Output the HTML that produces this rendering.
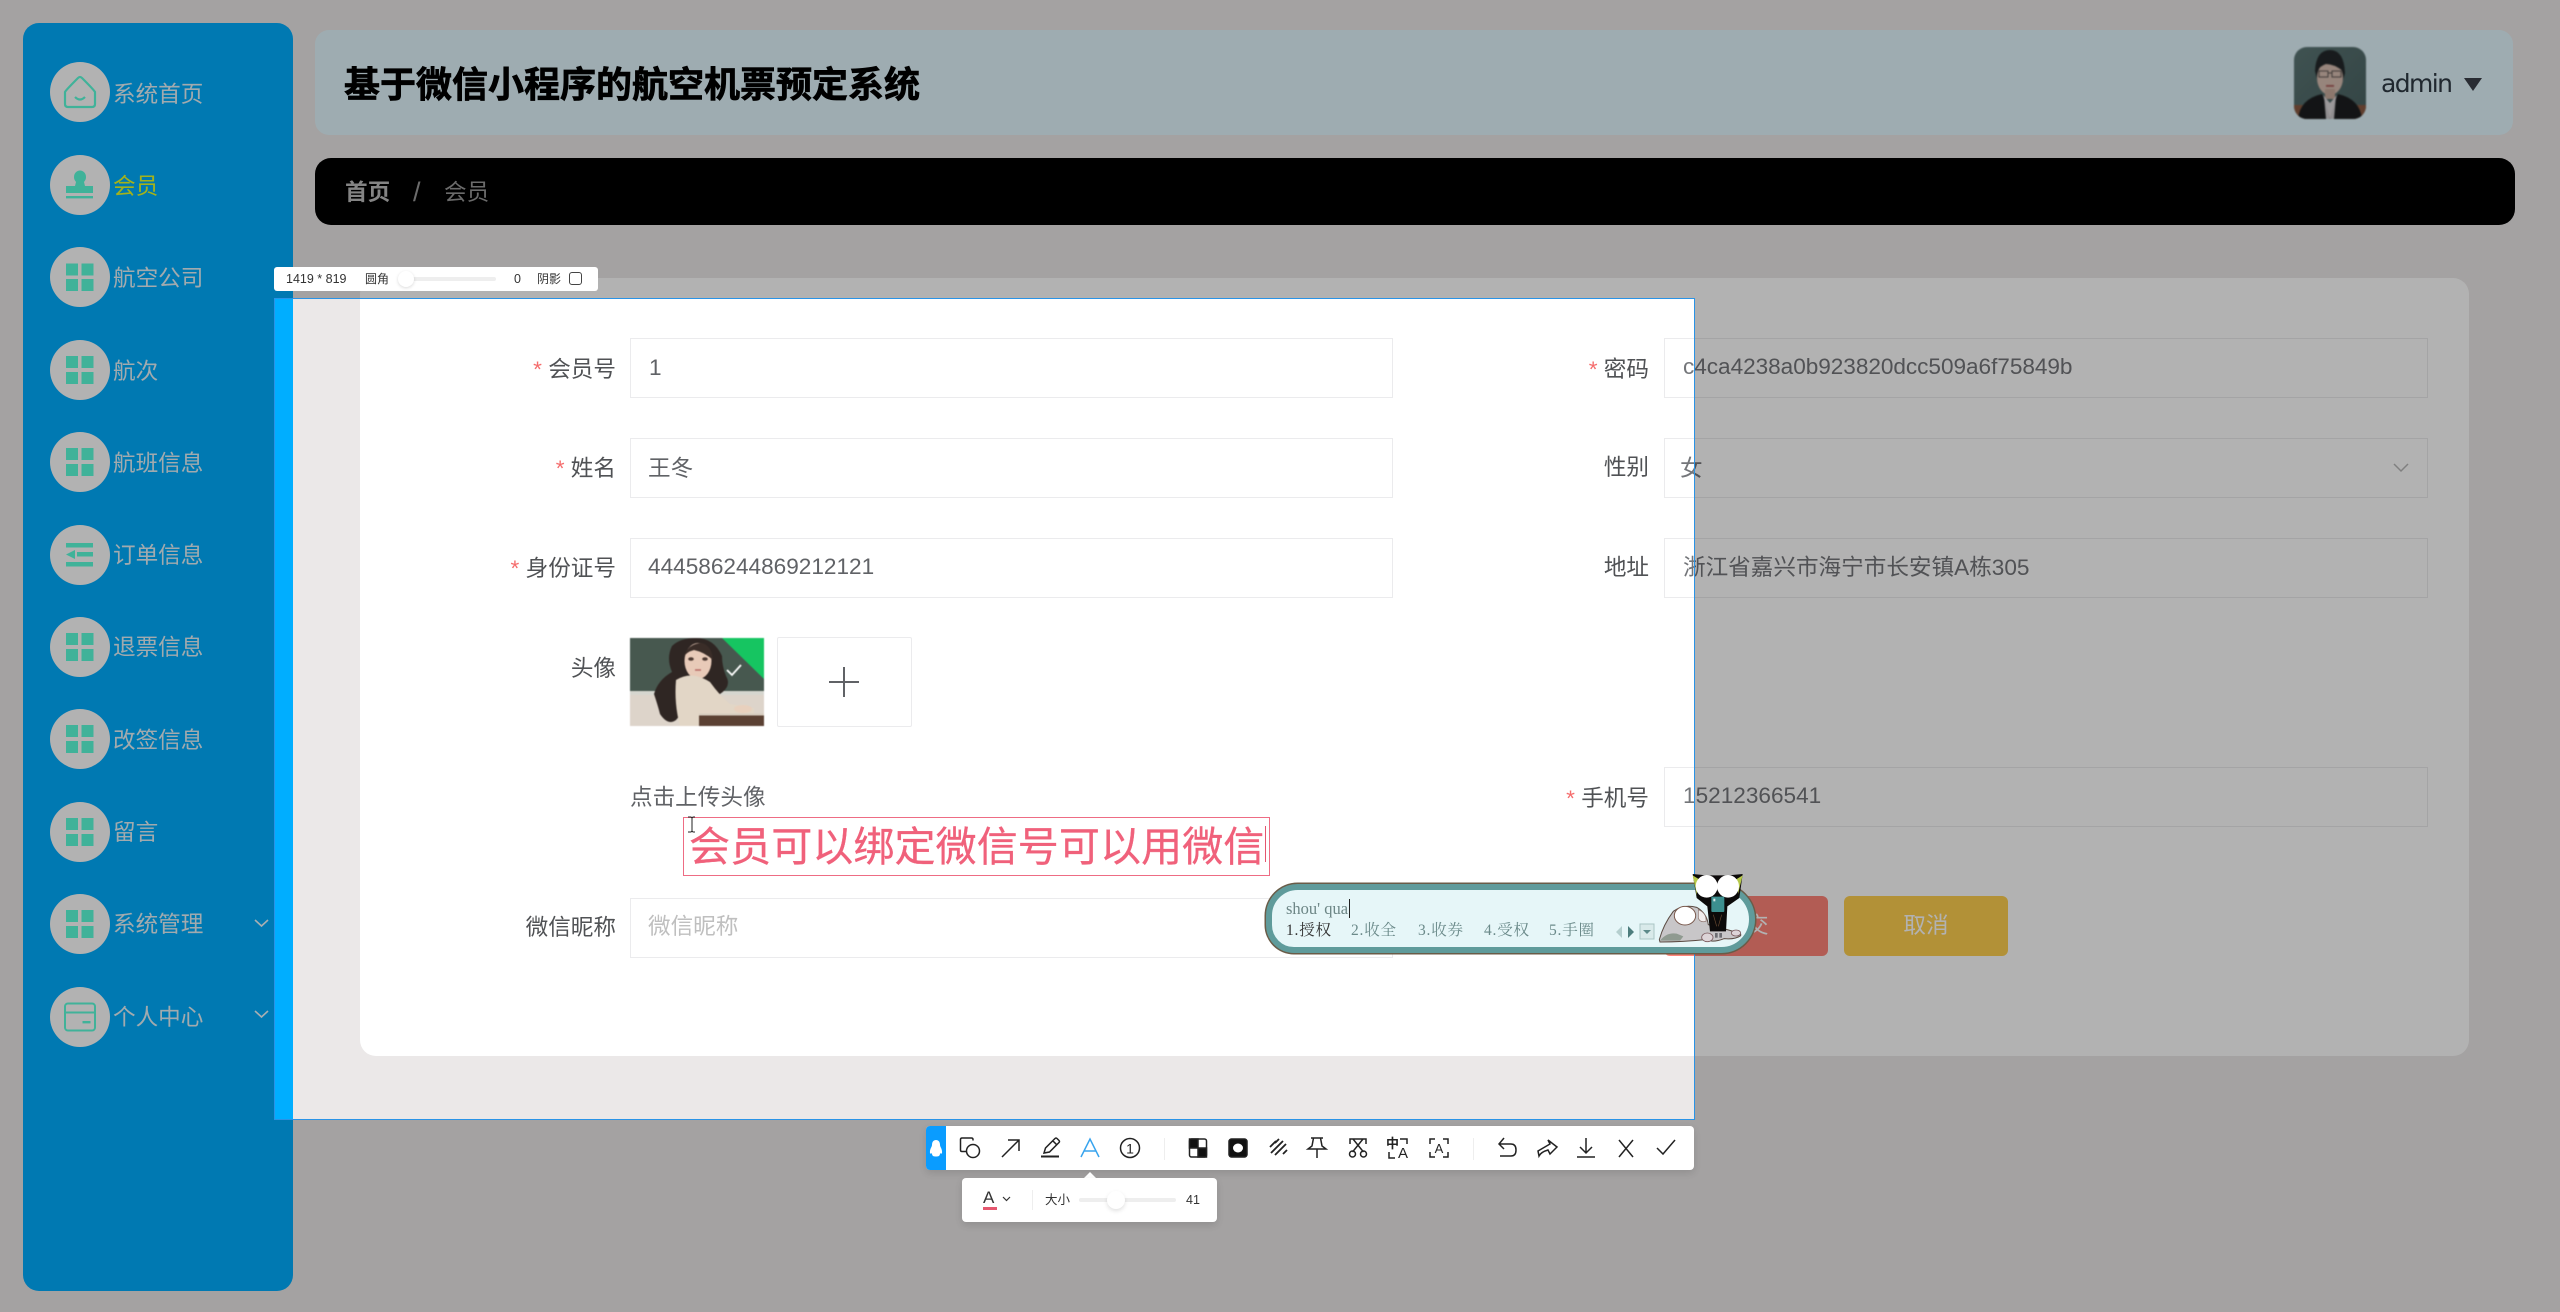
<!DOCTYPE html>
<html lang="zh"><head><meta charset="utf-8"><title>会员</title>
<style>
html,body{margin:0;padding:0}
body{width:2560px;height:1312px;position:relative;overflow:hidden;background:#ebe8e8;font-family:"Liberation Sans","Noto Sans CJK SC",sans-serif;font-size:22.6px;color:#606266}
.a{position:absolute;white-space:nowrap}
.side{left:23px;top:23px;width:270px;height:1268px;background:#00aeff;border-radius:16px}
.t{left:113px;height:40px;line-height:40px;color:#e8f4fa;font-size:22.6px}
.l{height:40px;line-height:40px;text-align:right;color:#505255;font-size:22.6px}
.l b{color:#f56c6c;font-weight:400}
.i{background:#fff;border:1px solid #ebebed;box-sizing:border-box;height:60px}
.v{height:40px;line-height:40px;color:#606266;font-size:22.6px}
.d{position:absolute;background:rgba(0,0,0,.3)}
.m{top:920px;font-family:'Liberation Serif','Noto Serif CJK SC',serif;font-size:15.5px;line-height:22px;color:#6b8a8a;letter-spacing:.8px}
</style></head><body>

<!-- sidebar -->
<div class="a side"></div>
<svg class="a" style="left:0;top:0" width="300" height="1100" fill="#5cffdc">
<circle cx="80" cy="92" r="30" fill="#fff"/><circle cx="80" cy="185" r="30" fill="#fff"/><circle cx="80" cy="277" r="30" fill="#fff"/><circle cx="80" cy="370" r="30" fill="#fff"/><circle cx="80" cy="462" r="30" fill="#fff"/><circle cx="80" cy="555" r="30" fill="#fff"/><circle cx="80" cy="647" r="30" fill="#fff"/><circle cx="80" cy="739" r="30" fill="#fff"/><circle cx="80" cy="832" r="30" fill="#fff"/><circle cx="80" cy="924" r="30" fill="#fff"/><circle cx="80" cy="1017" r="30" fill="#fff"/>
<path d="M65 92 Q66 90 78 78 Q80 76 82 78 Q94 90 95 92 V104 Q95 107 92 107 H68 Q65 107 65 104 Z" fill="none" stroke="#5cffdc" stroke-width="2.2"/>
<path d="M75 97 Q80 102 85 97" fill="none" stroke="#5cffdc" stroke-width="2.2"/>
<ellipse cx="80" cy="177" rx="6" ry="6.500"/><path d="M76.500 180h7l1.500 6h8v7H66v-7h9z"/><rect x="66" y="196" width="27" height="2.400"/>
<g><rect x="66" y="263.500" width="12" height="12"/><rect x="81.500" y="263.500" width="12" height="12"/><rect x="66" y="279" width="12" height="12"/><rect x="81.500" y="279" width="12" height="12"/></g>
<g><rect x="66" y="356" width="12" height="12"/><rect x="81.500" y="356" width="12" height="12"/><rect x="66" y="372" width="12" height="12"/><rect x="81.500" y="372" width="12" height="12"/></g>
<g><rect x="66" y="448" width="12" height="12"/><rect x="81.500" y="448" width="12" height="12"/><rect x="66" y="464" width="12" height="12"/><rect x="81.500" y="464" width="12" height="12"/></g>
<rect x="66" y="543" width="27" height="4.500"/><rect x="77" y="552" width="16" height="4.500"/><path d="M66 554.500l9-4.500v9z"/><rect x="66" y="562" width="27" height="4.500"/>
<g><rect x="66" y="633" width="12" height="12"/><rect x="81.500" y="633" width="12" height="12"/><rect x="66" y="649" width="12" height="12"/><rect x="81.500" y="649" width="12" height="12"/></g>
<g><rect x="66" y="725" width="12" height="12"/><rect x="81.500" y="725" width="12" height="12"/><rect x="66" y="741" width="12" height="12"/><rect x="81.500" y="741" width="12" height="12"/></g>
<g><rect x="66" y="818" width="12" height="12"/><rect x="81.500" y="818" width="12" height="12"/><rect x="66" y="834" width="12" height="12"/><rect x="81.500" y="834" width="12" height="12"/></g>
<g><rect x="66" y="910" width="12" height="12"/><rect x="81.500" y="910" width="12" height="12"/><rect x="66" y="926" width="12" height="12"/><rect x="81.500" y="926" width="12" height="12"/></g>
<rect x="65" y="1003.500" width="30" height="27" rx="3" fill="none" stroke="#5cffdc" stroke-width="2"/><path d="M65 1012.500H95" stroke="#5cffdc" stroke-width="2"/><rect x="82.500" y="1021" width="8" height="2.400"/>
<path d="M255 920l6.500 6 6.500-6M255 1011l6.500 6 6.500-6" fill="none" stroke="#f2fbff" stroke-width="1.600"/>
</svg>
<div class="a t" style="top:75px">系统首页</div>
<div class="a t" style="top:167px;color:#eaff28">会员</div>
<div class="a t" style="top:259px">航空公司</div>
<div class="a t" style="top:352px">航次</div>
<div class="a t" style="top:444px">航班信息</div>
<div class="a t" style="top:536px">订单信息</div>
<div class="a t" style="top:628px">退票信息</div>
<div class="a t" style="top:721px">改签信息</div>
<div class="a t" style="top:813px">留言</div>
<div class="a t" style="top:905px">系统管理</div>
<div class="a t" style="top:998px">个人中心</div>

<!-- header -->
<div class="a" style="left:315px;top:30px;width:2198px;height:105px;background:#e3f7fe;border-radius:14px"></div>
<div class="a" style="left:344px;top:61px;font-size:36px;line-height:48px;font-weight:700;color:#000;-webkit-text-stroke:.7px #000">基于微信小程序的航空机票预定系统</div>
<svg class="a" style="left:2294px;top:47px;border-radius:13px;filter:blur(.7px)" width="72" height="72" viewBox="0 0 72 72">
<defs><linearGradient id="bg" x1="0" y1="0" x2="1" y2="1"><stop offset="0" stop-color="#5b7675"/><stop offset="1" stop-color="#4a6262"/></linearGradient></defs>
<rect width="72" height="72" fill="url(#bg)"/><rect y="58" width="72" height="14" fill="#8a5a42"/>
<path d="M21 24 Q22 3 36 3 Q50 3 51 26 L48 36 H24 Z" fill="#23282a"/>
<ellipse cx="36" cy="31" rx="13" ry="17" fill="#d9bfb2"/><path d="M23 24 Q27 10 38 10 Q49 12 49 24 Q40 17 32 17 Q26 19 23 24Z" fill="#23282a"/>
<rect x="31" y="42" width="10" height="10" fill="#c9ab9c"/>
<path d="M25 24h9v6h-9zM38 24h9v6h-9zM34 26h4" fill="none" stroke="#5a5350" stroke-width="1"/>
<rect x="32" y="38" width="8" height="1.800" fill="#a85a58"/>
<path d="M4 72 Q6 52 28 47 L36 60 L44 47 Q66 52 68 72Z" fill="#1c1e20"/><path d="M29 48 L36 72 L43 48 L36 56Z" fill="#dfdadd"/><path d="M30 49L36 72H32ZM42 49L36 72H40Z" fill="#d0ccd0"/>
</svg>
<div class="a" style="left:2381px;top:67px;line-height:34px;color:#2f3a44;font-family:'DejaVu Sans','Liberation Sans',sans-serif;letter-spacing:-1.6px;font-size:25px">admin</div>
<div class="a" style="left:2464px;top:78px;width:0;height:0;border-left:9px solid transparent;border-right:9px solid transparent;border-top:13px solid #3c3f4a"></div>

<!-- breadcrumb -->
<div class="a" style="left:315px;top:158px;width:2200px;height:67px;background:#000;border-radius:16px"></div>
<div class="a" style="left:345px;top:173px;line-height:40px;font-weight:700;color:#bdbdbd;font-size:22.6px">首页</div>
<div class="a" style="left:413px;top:172px;line-height:40px;color:#9a9a9a;font-size:27px">/</div>
<div class="a" style="left:444px;top:173px;line-height:40px;color:#9a9a9a;font-size:22.6px">会员</div>

<!-- white card -->
<div class="a" style="left:360px;top:278px;width:2109px;height:778px;background:#fff;border-radius:16px"></div>

<!-- left column -->
<div class="a l" style="left:400px;width:216px;top:350px"><b>*</b> 会员号</div>
<div class="a i" style="left:630px;top:338px;width:763px"></div><div class="a v" style="left:649px;top:348px">1</div>
<div class="a l" style="left:400px;width:216px;top:449px"><b>*</b> 姓名</div>
<div class="a i" style="left:630px;top:438px;width:763px"></div><div class="a v" style="left:648px;top:449px">王冬</div>
<div class="a l" style="left:400px;width:216px;top:549px"><b>*</b> 身份证号</div>
<div class="a i" style="left:630px;top:538px;width:763px"></div><div class="a v" style="left:648px;top:547px">444586244869212121</div>
<div class="a l" style="left:400px;width:216px;top:649px">头像</div>

<svg class="a" style="left:630px;top:638px;filter:blur(.6px)" width="134" height="88" viewBox="0 0 134 88">
<rect width="134" height="88" fill="#ddd4ca"/><rect width="134" height="54" fill="#47584f"/><rect y="53" width="134" height="4" fill="#d6d6cf"/>
<path d="M42 8 Q36 20 42 34 Q28 42 24 56 Q28 68 30 76 Q38 88 46 82 Q54 74 50 56 L54 44 L90 56 Q102 48 96 38 Q92 28 92 18 Q84 0 66 0 Q50 0 42 8Z" fill="#2f2623"/>
<ellipse cx="68" cy="23" rx="13.500" ry="18" fill="#e8cab8"/><path d="M53 20 Q58 5 72 5 Q82 8 83 22 Q74 14 64 12 Q56 14 53 20Z" fill="#3a2d28"/>
<ellipse cx="61" cy="21" rx="2.800" ry="1.800" fill="#4d3a32"/><ellipse cx="75" cy="21" rx="2.800" ry="1.800" fill="#4d3a32"/><path d="M65 32h6" stroke="#b86a66" stroke-width="1.500"/>
<path d="M46 42 Q56 36 66 38 Q74 40 80 44 Q90 58 100 66 L124 70 V76 L96 78 L72 76 L68 88 H50 Q44 66 46 42Z" fill="#e2d6c6"/>
<ellipse cx="113" cy="71" rx="9" ry="4" fill="#e8d0bd"/>
<rect x="69" y="77" width="65" height="11" fill="#5b4133"/><rect x="69" y="75.500" width="65" height="2" fill="#d7cdc0"/>
<path d="M92 0H134V41Z" fill="#16c561"/><path d="M97 32l5 5 9-10" fill="none" stroke="#fff" stroke-width="1.800"/>
</svg>
<div class="a" style="left:777px;top:637px;width:135px;height:90px;background:#fff;border:1px solid #ebebed;box-sizing:border-box;border-radius:2px"></div>
<svg class="a" style="left:829px;top:667px" width="30" height="30"><path d="M15 0V30M0 15H30" stroke="#606266" stroke-width="2"/></svg>
<div class="a v" style="left:630px;top:778px">点击上传头像</div>

<!-- annotation text -->
<div class="a" style="left:683px;top:817px;width:587px;height:59px;border:1px solid #ee6c84;box-sizing:border-box"></div>
<div class="a" style="left:689px;top:821px;font-size:41px;line-height:52px;color:#f0617b;width:576px;overflow:hidden;letter-spacing:.1px;-webkit-text-stroke:.3px #f0617b">会员可以绑定微信号可以用微信</div>
<div class="a" style="left:1265px;top:826px;width:1px;height:36px;background:#e5566f"></div>
<svg class="a" style="left:686px;top:816px" width="10" height="18"><path d="M2 1h3l1 1 1-1h2M6 2V15M2 16h3l1-1 1 1h2" fill="none" stroke="#222" stroke-width="1"/></svg>

<div class="a l" style="left:400px;width:216px;top:908px">微信昵称</div>
<div class="a i" style="left:630px;top:898px;width:763px"></div><div class="a v" style="left:648px;top:907px;color:#bfbfbf">微信昵称</div>

<!-- right column -->
<div class="a l" style="left:1400px;width:249px;top:350px"><b>*</b> 密码</div>
<div class="a i" style="left:1664px;top:338px;width:764px"></div><div class="a v" style="left:1683px;top:347px;color:#74767a;letter-spacing:-.04px">c4ca4238a0b923820dcc509a6f75849b</div>
<div class="a l" style="left:1400px;width:249px;top:448px">性别</div>
<div class="a i" style="left:1664px;top:438px;width:764px"></div><div class="a v" style="left:1680px;top:449px;color:#74767a">女</div>
<svg class="a" style="left:2393px;top:463px" width="16" height="10"><path d="M1 1l7 7 7-7" fill="none" stroke="#b8b8b8" stroke-width="1.500"/></svg>
<div class="a l" style="left:1400px;width:249px;top:548px">地址</div>
<div class="a i" style="left:1664px;top:538px;width:764px"></div><div class="a v" style="left:1683px;top:548px;color:#74767a">浙江省嘉兴市海宁市长安镇A栋305</div>
<div class="a l" style="left:1400px;width:249px;top:779px"><b>*</b> 手机号</div>
<div class="a i" style="left:1664px;top:767px;width:764px"></div><div class="a v" style="left:1683px;top:776px;color:#74767a">15212366541</div>

<div class="a" style="left:1664px;top:896px;width:164px;height:60px;background:#ff8479;border-radius:6px;color:#fff;line-height:60px;text-align:center;font-size:22.6px">提交</div>
<div class="a" style="left:1844px;top:896px;width:164px;height:60px;background:#ffd050;border-radius:6px;color:#fff;line-height:60px;text-align:center;font-size:22.6px">取消</div>

<!-- dim overlays -->
<div class="d" style="left:0;top:0;width:2560px;height:298px"></div>
<div class="d" style="left:0;top:1119px;width:2560px;height:193px"></div>
<div class="d" style="left:0;top:298px;width:274px;height:821px"></div>
<div class="d" style="left:1694px;top:298px;width:866px;height:821px"></div>
<div class="a" style="left:274px;top:298px;width:1421px;height:822px;border:1px solid #2a93e6;box-sizing:border-box"></div>

<!-- top size tooltip -->
<div class="a" style="left:274px;top:267px;width:324px;height:24px;background:#fff;border-radius:3px;color:#333;font-size:12.5px;line-height:24px">
<span class="a" style="left:12px">1419 * 819</span><span class="a" style="left:91px;font-size:12px">圆角</span>
<span class="a" style="left:130px;top:10px;width:92px;height:4px;background:#eee;border-radius:2px"></span>
<span class="a" style="left:124px;top:4px;width:16px;height:16px;background:#fff;border-radius:50%;box-shadow:0 1px 3px rgba(0,0,0,.15)"></span>
<span class="a" style="left:240px">0</span><span class="a" style="left:263px;font-size:12px">阴影</span>
<span class="a" style="left:295px;top:5px;width:13px;height:13px;border:1px solid #444;border-radius:3px;box-sizing:border-box"></span>
</div>

<!-- toolbar -->
<div class="a" style="left:926px;top:1126px;width:768px;height:44px;background:#fff;border-radius:4px;box-shadow:0 3px 8px rgba(0,0,0,.12);overflow:hidden"><div class="a" style="left:0;top:0;width:20px;height:44px;background:#0a9cff"></div></div>
<svg class="a" style="left:926px;top:1126px" width="768" height="44" viewBox="0 0 768 44" fill="none" stroke="#222" stroke-width="1.5">
<path d="M10 14c3 0 4 2.500 4 5 0 2 2.500 4 2 8-.5 1.500-1.500 0-2 .5 0 2.500-1.500 3-4 3s-4-.5-4-3c-.5-.5-1.500 1-2-.5-.5-4 2-6 2-8 0-2.500 1-5 4-5z" fill="#fff" stroke="none"/>
<path d="M47 14.500V13.500Q47 12 45.500 12H36Q34.500 12 34.500 13.500V24Q34.500 25.500 36 25.500H40.500"/><circle cx="47" cy="25" r="6.500"/>
<path d="M76 31L93 14M82 14H93V25"/>
<path d="M118 27L119.500 22L129 12.500Q130 11.500 131 12.500L133 14.500Q134 15.500 133 16.500L123.500 26Z M127 15L131 19"/><path d="M115 30.500H133" stroke-width="2"/>
<path d="M155 31L164 13L173 31M158.500 25H169.500" stroke="#38a4ee"/>
<circle cx="204" cy="22" r="9.500"/><text x="204" y="27.500" font-size="14" fill="#222" stroke="none" text-anchor="middle" font-family="Liberation Sans,sans-serif">1</text>
<rect x="263.500" y="13" width="17" height="18" rx="2"/><rect x="263.500" y="13" width="8.500" height="9" fill="#111"/><rect x="272" y="22" width="8.500" height="9" fill="#111"/>
<rect x="303" y="13" width="18" height="18" rx="2.500" fill="#111"/><ellipse cx="312" cy="22" rx="5" ry="4.500" fill="#fff" stroke="none"/>
<path d="M344 21l6-6M349 17l4-4M345 27l12-12M349 29l11-11M357 28l4-4" stroke-width="1.800"/>
<path d="M385 12H397M387.500 12L386 20L382 23H400L396 20L394.500 12M391 23V32"/>
<path d="M424 18V13H440V18M427 13L437.500 26M437 13L426.500 26"/><circle cx="426.500" cy="28" r="3"/><circle cx="437.500" cy="28" r="3"/>
<text x="466.500" y="22" font-size="13" font-weight="700" fill="#222" stroke="none" text-anchor="middle" font-family="Noto Sans CJK SC,sans-serif">中</text><text x="477" y="32" font-size="15" fill="#222" stroke="none" text-anchor="middle" font-family="Liberation Sans,sans-serif">A</text>
<path d="M474 13H481V18M463 26V32H469" stroke-width="1.500"/>
<path d="M504 18V13H509M517 13H522V18M522 26V31H517M509 31H504V26" stroke-width="1.500"/><text x="513" y="27" font-size="13" fill="#222" stroke="none" text-anchor="middle" font-family="Liberation Sans,sans-serif">A</text>
<path d="M574 18H585Q590 18 590 24Q590 30 585 30H574M578 12L573 18L578 23"/>
<path d="M613 30L612 25L624 18L622 14L631 21L624 28L622 24Q615 26 613 30Z"/>
<path d="M660 12V26M654 21L660 27L666 21M651 31H669"/>
<path d="M693 14L707 31M707 14L693 31"/>
<path d="M731 22L737 28L749 14"/>
</svg>
<div class="a" style="left:1164px;top:1138px;width:1px;height:22px;background:#eee"></div>
<div class="a" style="left:1473px;top:1138px;width:1px;height:22px;background:#eee"></div>

<!-- text popup -->
<div class="a" style="left:1084px;top:1172px;width:0;height:0;border-left:6px solid transparent;border-right:6px solid transparent;border-bottom:6px solid #fff"></div>
<div class="a" style="left:962px;top:1178px;width:255px;height:44px;background:#fff;border-radius:4px;box-shadow:0 3px 8px rgba(0,0,0,.12)"></div>
<div class="a" style="left:983px;top:1188px;font-size:17px;line-height:20px;color:#333">A</div>
<div class="a" style="left:983px;top:1207px;width:14px;height:2.5px;background:#e5576f"></div>
<svg class="a" style="left:1002px;top:1196px" width="9" height="6"><path d="M1 1l3.500 3.500L8 1" fill="none" stroke="#333" stroke-width="1.200"/></svg>
<div class="a" style="left:1032px;top:1190px;width:1px;height:20px;background:#eee"></div>
<div class="a" style="left:1045px;top:1190px;font-size:12.5px;line-height:20px;color:#333">大小</div>
<div class="a" style="left:1079px;top:1198px;width:97px;height:4px;background:#eee;border-radius:2px"></div>
<div class="a" style="left:1107px;top:1191px;width:18px;height:18px;background:#fff;border-radius:50%;box-shadow:0 2px 4px rgba(0,0,0,.12)"></div>
<div class="a" style="left:1186px;top:1190px;font-size:12.5px;line-height:20px;color:#333">41</div>

<!-- IME -->
<div class="a" style="left:1266px;top:884px;width:489px;height:69px;box-sizing:border-box;background:#e6f6f8;border:6px solid #5f9b9b;border-radius:34px 38px 36px 30px;box-shadow:0 0 0 1.5px #6a5c48"></div>
<div class="a" style="left:1286px;top:899px;font-family:'Liberation Serif','Noto Serif CJK SC',serif;font-size:16.5px;line-height:20px;color:#6d8686">shou' qua</div>
<div class="a" style="left:1349px;top:899px;width:1px;height:19px;background:#222"></div>
<div class="a m" style="left:1286px;color:#333">1.授权</div>
<div class="a m" style="left:1351px">2.收全</div>
<div class="a m" style="left:1418px">3.收券</div>
<div class="a m" style="left:1484px">4.受权</div>
<div class="a m" style="left:1549px">5.手圈</div>
<svg class="a" style="left:1612px;top:922px" width="46" height="20">
<path d="M10 4L4 10l6 6z" fill="#b5cfcf"/><path d="M16 4l6 6-6 6z" fill="#4d7d7d"/>
<rect x="28" y="2" width="14" height="15" fill="#d9eaea" stroke="#aac5c5"/><path d="M31 8h8l-4 4z" fill="#5d8a8a"/>
</svg>
<svg class="a" style="left:1650px;top:868px" width="115" height="85" viewBox="0 0 345 255">
<path d="M28 215 Q40 170 70 130 Q100 108 140 118 Q170 135 175 170 Q215 180 250 190 Q275 190 272 203 Q255 215 222 212 Q190 225 165 215 Q100 222 30 222Z" fill="#c8c6c8" stroke="#5a4a42" stroke-width="3"/>
<path d="M30 218 Q50 192 80 197 L100 205 L90 218Z" fill="#8f9a90"/>
<ellipse cx="105" cy="143" rx="32" ry="28" fill="#fff" stroke="#7a5a4e" stroke-width="3"/>
<path d="M145 125 Q170 135 168 160 Q150 165 145 150Z" fill="#f1eded" stroke="#8a706a" stroke-width="2"/>
<path d="M128 18 L170 22 H235 L278 18 L268 90 L232 115 L228 190 H180 L172 115 L140 90Z" fill="#0c0a0a"/>
<path d="M128 22L154 38 Q140 55 141 82Z" fill="#b6c94a"/><path d="M278 22L252 38 Q265 55 264 78Z" fill="#b6c94a"/>
<ellipse cx="170" cy="55" rx="33" ry="34" fill="#fff"/><ellipse cx="234" cy="55" rx="33" ry="34" fill="#fff"/>
<rect x="184" y="86" width="39" height="46" rx="3" fill="#3c8f8f"/><rect x="190" y="92" width="6" height="8" fill="#d8e8e8"/>
<path d="M190 140L200 175M215 140L205 175" stroke="#6a4a30" stroke-width="2"/>
<ellipse cx="172" cy="208" rx="17" ry="13" fill="#ddd4d8" stroke="#7a5a5e" stroke-width="2.500"/><ellipse cx="258" cy="195" rx="14" ry="9" fill="#ddd4d8" stroke="#7a5a5e" stroke-width="2.500"/>
<rect x="195" y="195" width="8" height="14" fill="#6d6d72"/><rect x="208" y="195" width="8" height="14" fill="#6d6d72"/>
</svg>

</body></html>
